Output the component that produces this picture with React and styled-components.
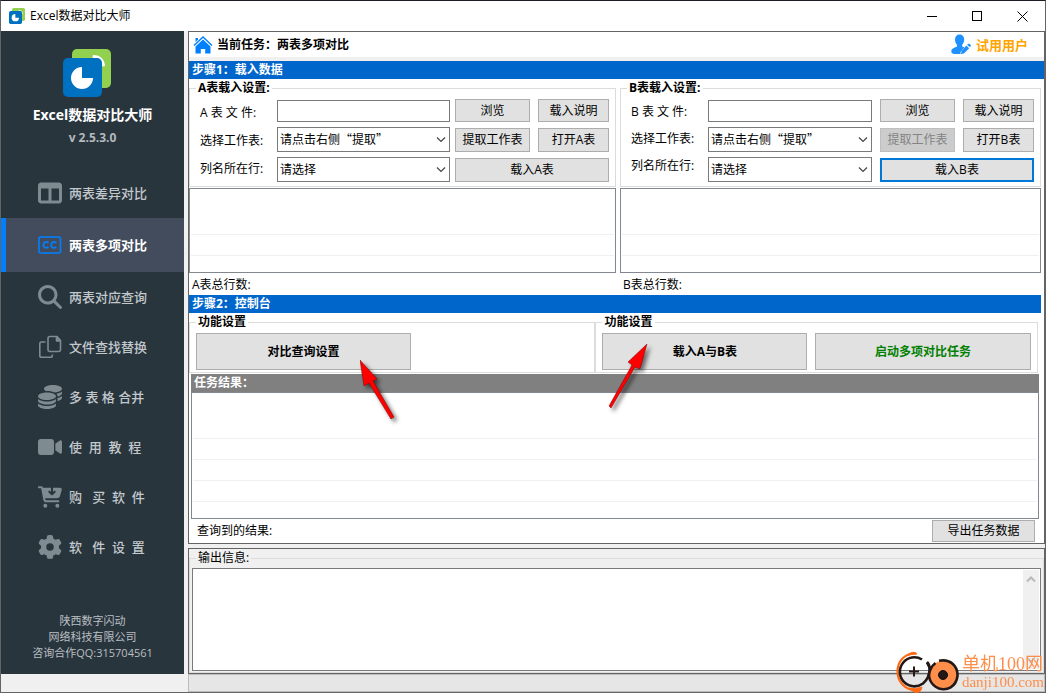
import React from "react";
import styled, { createGlobalStyle, css } from "styled-components";
import {
  FaTableColumns,
  FaMagnifyingGlass,
  FaCoins,
  FaVideo,
  FaCartArrowDown,
  FaGear,
} from "react-icons/fa6";

const Global = createGlobalStyle`
  *, *::before, *::after { box-sizing: border-box; }
  body {
    margin: 0;
    background: #f0f0f0;
    color: #000;
    font: 12px/16px "Open Sans", "Noto Sans CJK SC", sans-serif;
  }
  button, input, select, textarea { font: inherit; color: inherit; border-radius: 0; margin: 0; }
`;

const Window = styled.div`
  min-height: 100vh;
  display: flex;
  flex-direction: column;
  border: 1px solid #646464;
  border-top-color: #1c1a24;
`;

const TitleBar = styled.header`
  display: flex;
  align-items: stretch;
  height: 30px;
  background: #fff;
`;

const AppName = styled.div`
  flex: 1;
  display: flex;
  align-items: center;
  gap: 5px;
  padding-left: 8px;
`;

const CaptionButton = styled.button`
  width: 45px;
  padding: 0;
  border: 0;
  background: none;
  display: flex;
  align-items: center;
  justify-content: center;
`;

const Body = styled.div`
  flex: 1;
  display: flex;
  gap: 4px;
`;

const Sidebar = styled.aside`
  width: 183px;
  margin-bottom: 18px;
  background: #29353d;
  display: flex;
  flex-direction: column;
`;

const Brand = styled.div`
  height: 137px;
  padding: 18px 0 0 0;
  display: flex;
  flex-direction: column;
  align-items: center;
`;

const BrandLogo = styled.div`
  height: 56px;
  padding-right: 12px;
`;

const BrandName = styled.strong`
  font-size: 14px;
  line-height: 20px;
  color: #fff;
`;

const Version = styled.strong`
  padding-top: 4px;
  line-height: 18px;
  color: #b4babe;
`;

const Nav = styled.nav`
  flex: 1;
  display: flex;
  flex-direction: column;
`;

const NavLink = styled.a`
  display: flex;
  align-items: center;
  gap: 7px;
  height: 50px;
  padding-left: 37px;
  font-size: 13px;
  font-weight: 500;
  white-space: pre;
  text-decoration: none;
  color: #c2c8cc;
  svg { color: #7f8a91; }
  ${(p) =>
    p.$active &&
    css`
      height: 54px;
      padding-left: 32px;
      border-left: 5px solid #0080ff;
      background: #424c5c;
      color: #fff;
      font-weight: 700;
      svg { color: #0080ff; }
    `}
`;

const Company = styled.footer`
  padding-bottom: 13px;
  font-size: 11px;
  line-height: 16px;
  text-align: center;
  color: #b9bfc3;
`;

const Main = styled.main`
  flex: 1;
  min-width: 0;
  display: flex;
  flex-direction: column;
`;

const Panel = styled.section`
  display: flex;
  flex-direction: column;
  border: 1px solid #646464;
  border-bottom-width: 1px;
  background: ${(p) => p.$bg};
  flex: ${(p) => (p.$grow ? 1 : "none")};
  margin-bottom: ${(p) => (p.$grow ? 0 : 4)}px;
`;

const TaskHeader = styled.div`
  display: flex;
  align-items: center;
  justify-content: space-between;
  height: 29px;
  padding: 0 16px 0 4px;
  border-bottom: 4px solid #f0f0f0;
  font-weight: 700;
`;

const HeaderItem = styled.div`
  display: flex;
  align-items: center;
  gap: 4px;
`;

const UserName = styled.span`
  font-size: 13px;
  color: #ffa500;
`;

const StepBar = styled.h2`
  margin: 0 ${(p) => p.$inset || 0}px 0 0;
  padding-left: 3px;
  font-size: 12px;
  line-height: 18px;
  font-weight: 700;
  color: #fff;
  background: #0066cc;
`;

const Split = styled.div`
  display: flex;
  gap: ${(p) => p.$gap}px;
  padding-right: ${(p) => p.$right}px;
`;

const Pane = styled.div`
  flex: ${(p) => p.$share} 1 0;
  min-width: 0;
`;

const Group = styled.fieldset`
  margin: 0;
  min-width: 0;
  padding: ${(p) => p.$pad};
  border: 1px solid #dcdcdc;
  display: flex;
  flex-direction: column;
  flex: ${(p) => (p.$grow ? 1 : "none")};
  > legend {
    margin-left: ${(p) => p.$legend}px;
    padding: 0 2px;
    line-height: 18px;
    font-weight: ${(p) => (p.$plain ? 400 : 700)};
  }
`;

const LoadForm = styled.div`
  display: flex;
`;

const Labels = styled.div`
  width: 77px;
  padding-top: ${(p) => p.$top}px;
  display: flex;
  flex-direction: column;
  gap: ${(p) => p.$gap}px;
`;

const Fields = styled.div`
  flex: 1;
  min-width: 0;
  padding-top: 1px;
  display: flex;
  flex-direction: column;
  gap: 5px;
`;

const TextInput = styled.input`
  height: 22px;
  width: 100%;
  padding: 0 3px;
  border: 1px solid #7a7a7a;
  background: #fff;
`;

const SelectBox = styled.div`
  display: grid;
  align-items: center;
  height: 25px;
  > * { grid-area: 1 / 1; }
  > svg { justify-self: end; margin-right: 4px; pointer-events: none; }
`;

const Select = styled.select`
  appearance: none;
  width: 100%;
  height: 25px;
  padding: 0 20px 2px 2px;
  border: 1px solid #7a7a7a;
  background: #fff;
  font-family: "Noto Sans CJK SC", sans-serif;
`;

const Buttons = styled.div`
  display: grid;
  grid-template-columns: 75px 71px;
  grid-template-rows: 23px 24px 24px;
  gap: 6px 8px;
  padding-left: ${(p) => p.$left}px;
`;

const Button = styled.button`
  padding: 0;
  border: 1px solid #adadad;
  background: #e1e1e1;
  height: ${(p) => p.$height || "auto"};
  width: ${(p) => p.$width || "auto"};
  ${(p) => p.$wide && "grid-column: span 2;"}
  ${(p) => p.$focused && "border: 2px solid #0078d7;"}
  &:disabled {
    background: #ccc;
    border-color: #bfbfbf;
    color: #838383;
  }
`;

const ListView = styled.div`
  height: ${(p) => p.$height}px;
  padding: ${(p) => p.$head}px 1px 0;
  margin: ${(p) => p.$margin || 0};
  border: 1px solid #828790;
  overflow: hidden;
`;

const ListRow = styled.div`
  height: 21px;
  border-top: 1px solid #f0f0f0;
`;

const RowCount = styled.p`
  margin: 0;
  padding: 4px 3px 2px;
`;

const Action = styled.div`
  position: relative;
  flex: ${(p) => p.$flex};
  display: flex;
`;

const ActionButton = styled(Button)`
  flex: 1;
  height: 37px;
  font-weight: 700;
  color: ${(p) => (p.$go ? "#008000" : "#000")};
`;

const Actions = styled.div`
  display: flex;
  gap: 8px;
`;

const Arrow = styled.svg`
  position: absolute;
  z-index: 2;
  left: ${(p) => p.$x}px;
  top: ${(p) => p.$y}px;
  pointer-events: none;
  filter: drop-shadow(3px 3px 2px rgba(0, 0, 0, 0.55));
`;

const ResultBar = styled.h3`
  margin: 1px 5px 0 2px;
  padding-left: 3px;
  font-size: 12px;
  line-height: 18px;
  font-weight: 700;
  color: #fff;
  background: #808080;
`;

const ResultFooter = styled.div`
  display: flex;
  align-items: center;
  justify-content: space-between;
  padding: 1px 9px 1px 8px;
`;

const OutputBox = styled.div`
  flex: 1;
  min-height: 101px;
  display: flex;
  padding: 1px;
  border: 1px solid #7a7a7a;
  background: #fff;
`;

const Output = styled.textarea`
  flex: 1;
  resize: none;
  border: 0;
  padding: 2px;
  outline: 0;
  background: #fff;
`;

const ScrollTrack = styled.div`
  width: 16px;
  padding: 6px 0;
  display: flex;
  flex-direction: column;
  align-items: center;
  justify-content: space-between;
  background: #f0f0f0;
`;

const StatusBar = styled.div`
  height: 18px;
  border: 1px solid #bcbcbc;
  background: #e6e6e6;
`;

const Watermark = styled.div`
  position: fixed;
  right: 2px;
  bottom: 0;
  display: flex;
  align-items: center;
  gap: 3px;
  color: #ff8e4a;
  font-family: "Liberation Serif", "Noto Sans CJK SC", serif;
  pointer-events: none;
`;

const SiteName = styled.div`
  font-size: 18px;
  line-height: 20px;
  white-space: nowrap;
  small { display: block; font-size: 15px; line-height: 16px; }
`;

const Logo = ({ size }) => (
  <svg width={size} height={size} viewBox="0 0 48 48" aria-hidden="true">
    <rect x="9" y="0" width="39" height="39" rx="5" fill="#92d050" />
    <path d="M31 7.500Q39 8 40.500 16" fill="none" stroke="#fff" strokeWidth="3" strokeLinecap="round" />
    <rect x="0" y="9" width="39" height="39" rx="5" fill="#0070c0" />
    <path d="M19 18A11 11 0 1 0 30 29L19 29Z" fill="#fff" />
  </svg>
);

const CaptionsIcon = () => (
  <svg width="24" height="20" viewBox="0 0 24 20" fill="none" stroke="currentColor" aria-hidden="true">
    <rect x="1" y="2" width="21.500" height="16" rx="1.500" strokeWidth="1.600" />
    <path d="M10.500 7.800A3 3 0 1 0 10.500 12M18.300 7.800A3 3 0 1 0 18.300 12" strokeWidth="1.800" />
  </svg>
);

const CopyIcon = () => (
  <svg width="24" height="24" viewBox="0 0 24 24" fill="none" stroke="currentColor" strokeWidth="1.600" strokeLinejoin="round" aria-hidden="true">
    <path d="M7.500 7H3.500Q1.800 7 1.800 9V20.500Q1.800 22.300 3.500 22.300H12.500Q14.300 22.300 14.300 20.500V19.500" />
    <path d="M12 1.500H19L22.500 5.500V14.500Q22.500 16.500 20.500 16.500H12Q10 16.500 10 14.500V3.500Q10 1.500 12 1.500Z" />
    <path d="M18.500 2V6H22.500Z" fill="currentColor" />
  </svg>
);

const HomeIcon = () => (
  <svg width="20" height="20" viewBox="0 0 20 20" fill="#0080ff" aria-hidden="true">
    <path d="M10 4.500L17.500 11.500V18.500H12.200V14H7.800V18.500H2.500V11.500Z" />
    <path d="M1 10.500L10 2L19 10.500" fill="none" stroke="#0080ff" strokeWidth="1.500" />
    <path d="M2.500 3H5V4.600L2.500 7Z" />
  </svg>
);

const UserIcon = () => (
  <svg width="21" height="21" viewBox="0 0 21 21" fill="#1e90ff" aria-hidden="true">
    <path d="M8.500 .500C11.500 .500 13.200 2.500 13.200 5.500C13.200 8 12.200 9.500 11.200 10.700V12.500L13.300 13.500L9.500 18V20H4Q0 20 .300 17C.700 14.300 3.500 13.700 6 12.500V10.700C4.800 9.500 4 8 4 5.500C4 2.500 5.700 .500 8.500 .500Z" />
    <path d="M16 10.800L18 9.500L20 11.300L19 13.300Z" />
    <path d="M15.300 11.600L18.200 14.200L13.200 19.300L10 20.300L10.500 17Z" />
  </svg>
);

const Chevron = ({ up, color = "#444" }) => (
  <svg width="10" height="7" viewBox="0 0 10 7" aria-hidden="true">
    <path d={up ? "M1 5.500L5 1.500L9 5.500" : "M1 1.500L5 5.500L9 1.500"} fill="none" stroke={color} strokeWidth={up ? 2 : 1.2} />
  </svg>
);

const SiteLogo = () => (
  <svg width="63" height="42" viewBox="0 0 63 42" fill="none" aria-hidden="true">
    <path d="M20 2.500C8 2 1.500 11 1.500 20.500C1.500 31 9 38.500 19 39.500" stroke="#ff6a13" strokeWidth="2.200" />
    <path d="M10 4.500Q18 -1 21 3Q16 2.500 10 5ZM13 37Q20 39 26 36Q25 43 18 41Z" fill="#ff6a13" stroke="#ff6a13" />
    <path d="M26 8.500A14.500 14.500 0 1 0 27 32.500C31 29 33.500 25 33.500 19Q34 14 31 11" stroke="#231815" strokeWidth="2.600" />
    <path d="M18 15.500V25.500M13 20.500H23" stroke="#231815" strokeWidth="2" />
    <circle cx="47" cy="24" r="14" fill="#ff8e4a" />
    <path d="M43 9.800C54 7.500 62 15 61.500 25C60 36 51 40 43 37.500C34 34 31 25 34.500 18.500Q36 14.500 39.500 12M34.500 18.500L31 11.500" stroke="#231815" strokeWidth="2.600" />
    <circle cx="47" cy="24" r="4.500" fill="#231815" stroke="#111" />
  </svg>
);

const NAV = [
  { text: "两表差异对比", icon: <FaTableColumns size={24} /> },
  { text: "两表多项对比", icon: <CaptionsIcon />, active: true },
  { text: "两表对应查询", icon: <FaMagnifyingGlass size={24} /> },
  { text: "文件查找替换", icon: <CopyIcon /> },
  { text: "多 表 格 合并", icon: <FaCoins size={24} /> },
  { text: "使  用  教  程", icon: <FaVideo size={24} /> },
  { text: "购   买  软  件", icon: <FaCartArrowDown size={24} /> },
  { text: "软   件  设  置", icon: <FaGear size={24} /> },
];

function LoadPane({ name, share, labelTop, labelGap, buttonsLeft, extractDisabled, loadFocused, legend }) {
  const id = name.toLowerCase();
  return (
    <Pane $share={share}>
      <Group $pad="2px 6px 4px 10px" $legend={legend}>
        <legend>{name}表载入设置:</legend>
        <LoadForm>
          <Labels $top={labelTop} $gap={labelGap}>
            <label htmlFor={`${id}-file`}>{name} 表 文 件:</label>
            <label htmlFor={`${id}-sheet`}>选择工作表:</label>
            <label htmlFor={`${id}-row`}>列名所在行:</label>
          </Labels>
          <Fields>
            <TextInput id={`${id}-file`} type="text" />
            <SelectBox>
              <Select id={`${id}-sheet`}>
                <option>请点击右侧“提取”</option>
              </Select>
              <Chevron />
            </SelectBox>
            <SelectBox>
              <Select id={`${id}-row`}>
                <option>请选择</option>
              </Select>
              <Chevron />
            </SelectBox>
          </Fields>
          <Buttons $left={buttonsLeft}>
            <Button>浏览</Button>
            <Button>载入说明</Button>
            <Button disabled={extractDisabled}>提取工作表</Button>
            <Button>打开{name}表</Button>
            <Button $wide $focused={loadFocused}>载入{name}表</Button>
          </Buttons>
        </LoadForm>
      </Group>
      <ListView $height={85} $head={45} $margin="1px 0 0">
        <ListRow />
        <ListRow />
      </ListView>
      <RowCount>{name}表总行数:</RowCount>
    </Pane>
  );
}

export default function App() {
  return (
    <>
      <Global />
      <Window lang="zh-CN">
        <TitleBar>
          <AppName>
            <Logo size={16} />
            <span>Excel数据对比大师</span>
          </AppName>
          <CaptionButton aria-label="最小化">
            <svg width="11" height="11"><path d="M0 5.500H10" stroke="#000" /></svg>
          </CaptionButton>
          <CaptionButton aria-label="最大化">
            <svg width="11" height="11"><rect x=".5" y=".5" width="9" height="9" fill="none" stroke="#000" /></svg>
          </CaptionButton>
          <CaptionButton aria-label="关闭">
            <svg width="11" height="11"><path d="M.5 .5L10.500 10.500M10.500 .5L.5 10.500" stroke="#000" /></svg>
          </CaptionButton>
        </TitleBar>

        <Body>
          <Sidebar>
            <Brand>
              <BrandLogo><Logo size={48} /></BrandLogo>
              <BrandName>Excel数据对比大师</BrandName>
              <Version>v 2.5.3.0</Version>
            </Brand>
            <Nav>
              {NAV.map((item) => (
                <NavLink key={item.text} href="#" $active={item.active}>
                  {item.icon}
                  {item.text}
                </NavLink>
              ))}
            </Nav>
            <Company>
              陕西数字闪动
              <br />
              网络科技有限公司
              <br />
              咨询合作QQ:315704561
            </Company>
          </Sidebar>

          <Main>
            <Panel $bg="#fff">
              <TaskHeader>
                <HeaderItem>
                  <HomeIcon />
                  <span>当前任务：两表多项对比</span>
                </HeaderItem>
                <HeaderItem>
                  <UserIcon />
                  <UserName>试用用户</UserName>
                </HeaderItem>
              </TaskHeader>

              <StepBar>步骤1：载入数据</StepBar>
              <Split $gap={4} $right={3}>
                <LoadPane name="A" share={427} labelTop={6} labelGap={12} buttonsLeft={5} legend={-4} />
                <LoadPane name="B" share={421} labelTop={5} labelGap={11} buttonsLeft={8} legend={-4} extractDisabled loadFocused />
              </Split>

              <StepBar $inset={3}>步骤2：控制台</StepBar>
              <Split $gap={0} $right={6}>
                <Pane $share={406}>
                  <Group $pad="2px 6px 2px" $legend={0}>
                    <legend>功能设置</legend>
                    <Actions>
                      <Action $flex="0 1 215px">
                        <ActionButton>对比查询设置</ActionButton>
                        <Arrow $x={164} $y={27} width="36" height="60" viewBox="0 0 36 60">
                          <path d="M0 0L17 19L13 21L34 57L31 59L9 23L4 26Z" fill="#f00" stroke="#7a0000" strokeWidth=".5" />
                        </Arrow>
                      </Action>
                    </Actions>
                  </Group>
                </Pane>
                <Pane $share={442}>
                  <Group $pad="2px 6px 2px" $legend={0}>
                    <legend>功能设置</legend>
                    <Actions>
                      <Action $flex="205 1 0">
                        <ActionButton>载入A与B表</ActionButton>
                        <Arrow $x={6} $y={11} width="42" height="66" viewBox="0 0 42 66">
                          <path d="M39 0L32 25L27 23L3 64L1 62L24 21L20 18Z" fill="#f00" stroke="#7a0000" strokeWidth=".5" />
                        </Arrow>
                      </Action>
                      <Action $flex="216 1 0">
                        <ActionButton $go>启动多项对比任务</ActionButton>
                      </Action>
                    </Actions>
                  </Group>
                </Pane>
              </Split>

              <ResultBar>任务结果：</ResultBar>
              <ListView $height={127} $head={45} $margin="0 5px 0 2px">
                <ListRow />
                <ListRow />
                <ListRow />
                <ListRow />
              </ListView>
              <ResultFooter>
                <span>查询到的结果:</span>
                <Button $width="103px" $height="22px">导出任务数据</Button>
              </ResultFooter>
            </Panel>

            <Panel $bg="#f0f0f0" $grow>
              <Group $pad="1px 2px 1px" $legend={4} $plain $grow>
                <legend><label htmlFor="output">输出信息:</label></legend>
                <OutputBox>
                  <Output id="output" readOnly />
                  <ScrollTrack>
                    <Chevron up color="#b8b8b8" />
                    <Chevron color="#b8b8b8" />
                  </ScrollTrack>
                </OutputBox>
              </Group>
            </Panel>
            <StatusBar />
          </Main>
        </Body>
      </Window>

      <Watermark>
        <SiteLogo />
        <SiteName>
          单机100网
          <small>danji100.com</small>
        </SiteName>
      </Watermark>
    </>
  );
}
